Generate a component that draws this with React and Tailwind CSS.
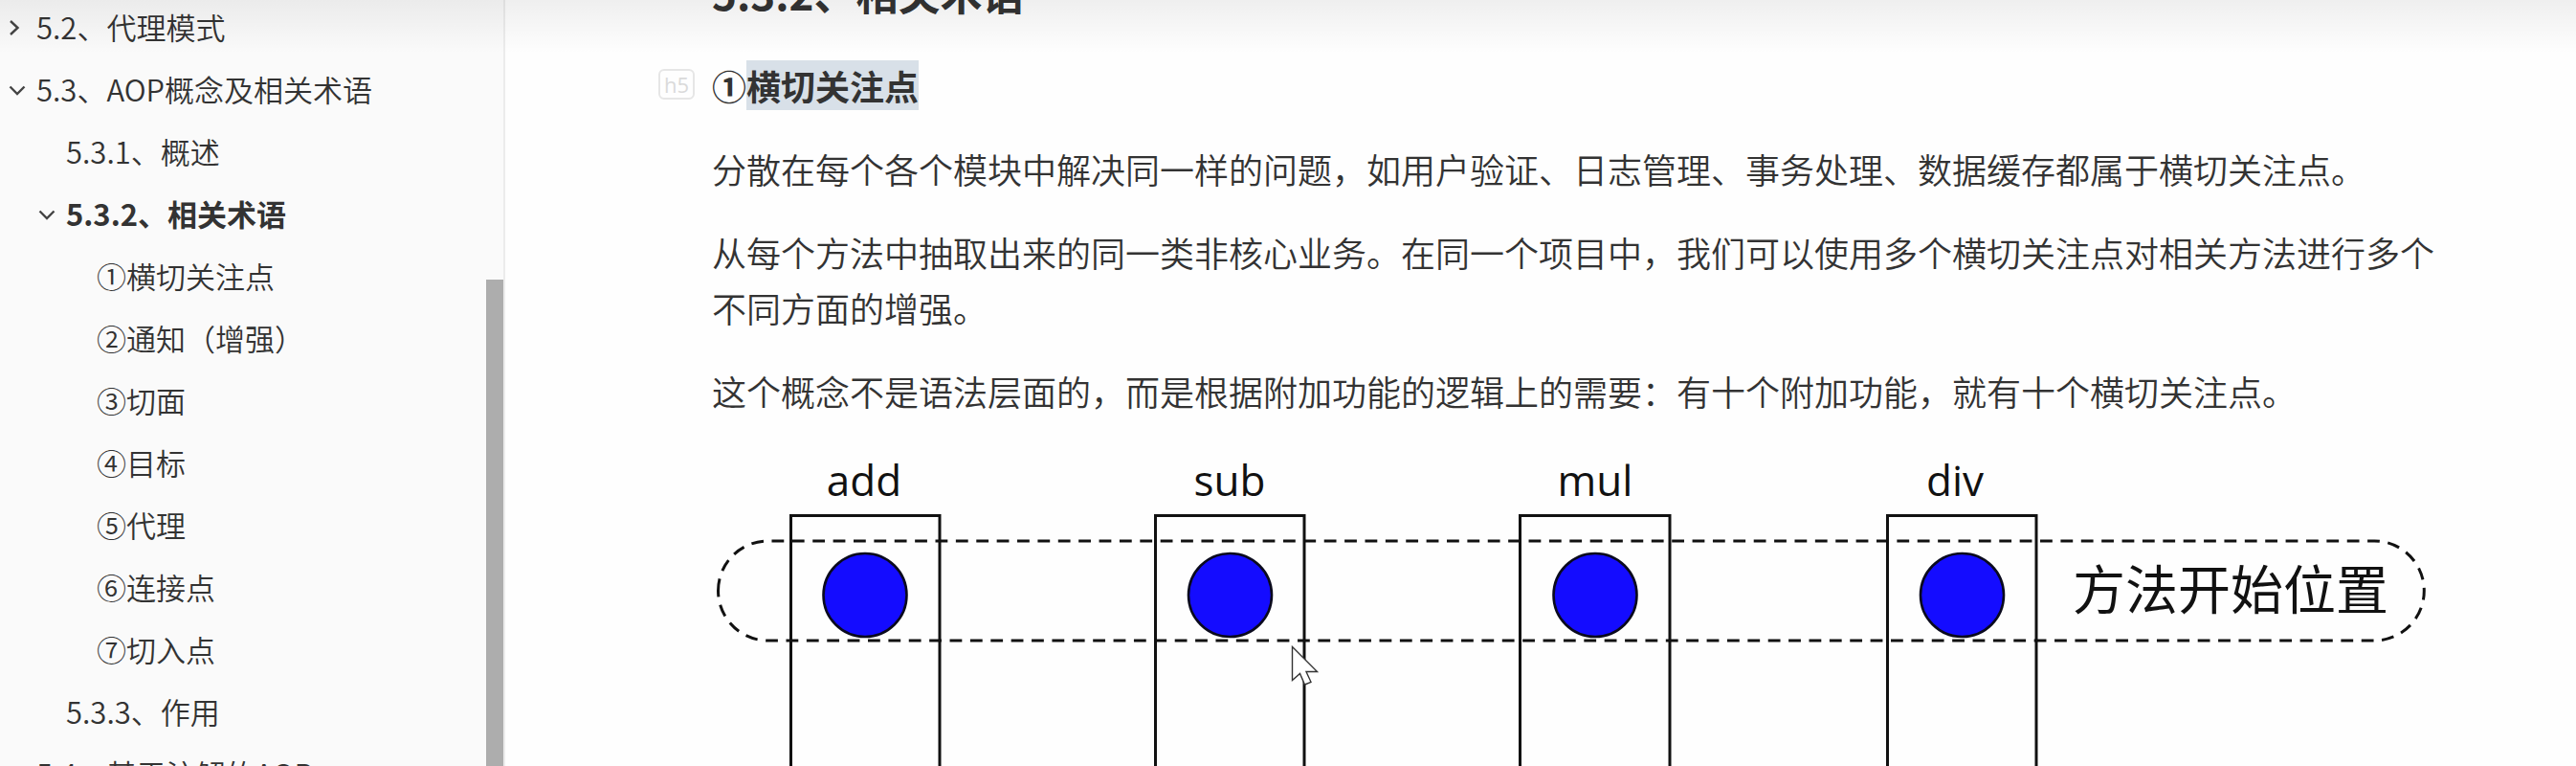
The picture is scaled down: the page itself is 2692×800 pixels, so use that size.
import React from "react";

const outline = [
  { label: "5.2、代理模式", level: 0, state: "closed" },
  { label: "5.3、AOP概念及相关术语", level: 0, state: "open" },
  { label: "5.3.1、概述", level: 1 },
  { label: "5.3.2、相关术语", level: 1, state: "open", active: true },
  { label: "①横切关注点", level: 2 },
  { label: "②通知（增强）", level: 2 },
  { label: "③切面", level: 2 },
  { label: "④目标", level: 2 },
  { label: "⑤代理", level: 2 },
  { label: "⑥连接点", level: 2 },
  { label: "⑦切入点", level: 2 },
  { label: "5.3.3、作用", level: 1 },
  { label: "5.4、基于注解的AOP", level: 0, state: "closed" },
];

const indent = ["pl-[6px]", "pl-[37px]", "pl-[69px]"];

const columns = [
  { name: "add", x: 82.5, width: 155.5, cx: 160, tx: 159 },
  { name: "sub", x: 463.5, width: 155.5, cx: 541.5, tx: 541 },
  { name: "mul", x: 844.5, width: 156.5, cx: 923, tx: 923 },
  { name: "div", x: 1228.5, width: 155.5, cx: 1306.5, tx: 1299 },
];

function Chevron({ open }) {
  return (
    <svg viewBox="0 0 24 24" className="h-6 w-6" fill="none" stroke="#444" strokeWidth="2.4">
      <path d={open ? "M4.5 8.5 L12 16 L19.5 8.5" : "M5 5 L12.5 12 L5 19"} />
    </svg>
  );
}

function OutlineItem({ item }) {
  return (
    <li className={`flex h-[65px] items-center ${indent[item.level]}`}>
      <span className="flex w-8 shrink-0 items-center">
        {item.state && (
          <button type="button" aria-label={item.state === "open" ? "收起" : "展开"}>
            <Chevron open={item.state === "open"} />
          </button>
        )}
      </span>
      <a href="#" className={`whitespace-nowrap ${item.active ? "font-bold text-[#333]" : ""}`}>
        {item.label}
      </a>
    </li>
  );
}

function Diagram() {
  return (
    <svg viewBox="0 0 1816 640" className="w-full" role="img" aria-label="横切关注点">
      {columns.map((c) => (
        <g key={c.name}>
          <text x={c.tx} y="52" fontSize="44" textAnchor="middle" fill="#111" className="font-['Open_Sans','Noto_Sans',sans-serif]">
            {c.name}
          </text>
          <rect x={c.x} y="72.5" width={c.width} height="600" fill="none" stroke="#111" strokeWidth="3" />
          <circle cx={c.cx} cy="155.5" r="43.5" fill="#140cff" stroke="#0a0a1e" strokeWidth="2.6" />
        </g>
      ))}
      <path
        d="M6.5 151 A52 52 0 0 1 58.5 99 H1737.3 A52 52 0 0 1 1737.3 203 H58.5 A52 52 0 0 1 6.5 151"
        fill="none"
        stroke="#111"
        strokeWidth="3"
        strokeDasharray="12.8 8.58"
      />
      <text x="1422" y="170" fontSize="55" fill="#111">
        方法开始位置
      </text>
    </svg>
  );
}

export default function App() {
  return (
    <div className="relative flex h-screen overflow-hidden bg-[#fefefe] font-['Noto_Sans_CJK_SC',sans-serif] text-[#333]">
      <aside className="flex w-[528px] shrink-0 border-r-2 border-[#ececec] bg-[#fafafa]">
        <nav className="min-w-0 flex-1 overflow-hidden" aria-label="大纲">
          <ul className="-mt-1 text-[31px] font-[350] text-[#333]">
            {outline.map((item) => (
              <OutlineItem key={item.label} item={item} />
            ))}
          </ul>
        </nav>
        <div className="flex w-[18px] flex-col pt-[292px]">
          <div className="flex-1 bg-[#adadad]" />
        </div>
      </aside>

      <main className="min-w-0 flex-1 overflow-hidden pl-[216px] pr-[132px]">
        <article className="-mt-10 text-4xl/[58px]">
          <h4 className="text-[44px]/[64px] font-bold">5.3.2、相关术语</h4>
          <h5 className="relative mt-9 font-bold">
            <span className="absolute -left-[56px] top-3 flex h-8 w-[38px] items-center justify-center rounded-md border-2 border-[#e6e6e6] font-['Open_Sans',sans-serif] text-[22px] font-normal text-[#dadada]">
              h5
            </span>
            ①<mark className="bg-[#d8e0e8] text-inherit">横切关注点</mark>
          </h5>
          <div className="font-[350]">
            <p className="mt-[29px]">分散在每个各个模块中解决同一样的问题，如用户验证、日志管理、事务处理、数据缓存都属于横切关注点。</p>
            <p className="mt-[29px]">从每个方法中抽取出来的同一类非核心业务。在同一个项目中，我们可以使用多个横切关注点对相关方法进行多个不同方面的增强。</p>
            <p className="mt-[29px]">这个概念不是语法层面的，而是根据附加功能的逻辑上的需要：有十个附加功能，就有十个横切关注点。</p>
          </div>
          <figure className="mt-[29px]">
            <Diagram />
          </figure>
        </article>
      </main>

      <div className="pointer-events-none absolute inset-x-0 top-0 h-14 bg-linear-to-b from-black/6 to-transparent" />
      <svg viewBox="0 0 30 42" className="pointer-events-none absolute left-[1349px] top-[674px] h-[42px] w-[30px]" aria-hidden="true">
        <path d="M1.5 1.5 V36.5 L9.5 29.5 L14.5 41 L21 38.3 L16 27.5 H27.5 Z" fill="#fff" stroke="#333" strokeWidth="1.4" />
      </svg>
    </div>
  );
}
